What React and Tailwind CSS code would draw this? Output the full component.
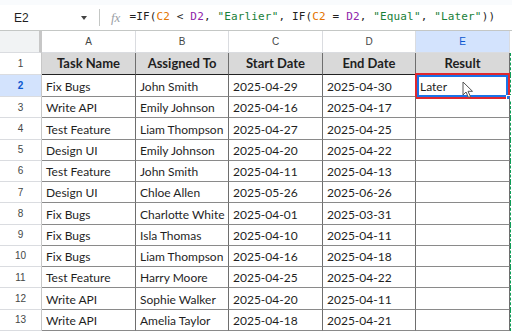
import React from "react";

const rows = [
  ["Fix Bugs", "John Smith", "2025-04-29", "2025-04-30", "Later"],
  ["Write API", "Emily Johnson", "2025-04-16", "2025-04-17", ""],
  ["Test Feature", "Liam Thompson", "2025-04-27", "2025-04-25", ""],
  ["Design UI", "Emily Johnson", "2025-04-20", "2025-04-22", ""],
  ["Test Feature", "John Smith", "2025-04-11", "2025-04-13", ""],
  ["Design UI", "Chloe Allen", "2025-05-26", "2025-06-26", ""],
  ["Fix Bugs", "Charlotte White", "2025-04-01", "2025-03-31", ""],
  ["Fix Bugs", "Isla Thomas", "2025-04-10", "2025-04-11", ""],
  ["Fix Bugs", "Liam Thompson", "2025-04-16", "2025-04-18", ""],
  ["Test Feature", "Harry Moore", "2025-04-25", "2025-04-22", ""],
  ["Write API", "Sophie Walker", "2025-04-20", "2025-04-11", ""],
  ["Write API", "Amelia Taylor", "2025-04-18", "2025-04-21", ""],
];

const headers = ["Task Name", "Assigned To", "Start Date", "End Date", "Result"];
const widths = ["w-[94px]", "w-[93px]", "w-[94px]", "w-[93px]", "w-[94px]"];
const letters = ["A", "B", "C", "D", "E"];

function Cursor() {
  return (
    <svg width="12" height="18" viewBox="0 0 12 18" className="absolute left-[45px] top-[6px]">
      <path d="M1 1 L1 14 L4 11 L6.5 16.5 L8.5 15.6 L6 10.3 L10.5 10.3 Z" fill="#fff" stroke="#555" strokeWidth="1" strokeLinejoin="round" />
    </svg>
  );
}

export default function App() {
  return (
    <div className="w-[512px] h-[331px] overflow-hidden bg-white" style={{ fontFamily: "Lato, 'Liberation Sans', sans-serif" }}>
      {/* formula bar */}
      <div className="h-[5px] bg-[#f9fbfd]" />
      <div className="h-[26px] flex items-center border-b border-[#c4c7c5] bg-white">
        <div className="w-[99px] flex items-center pl-[14px] pr-[12px] justify-between">
          <span className="text-[12px] text-[#1f1f1f]" style={{ fontFamily: "'Liberation Sans', sans-serif" }}>E2</span>
          <span className="w-0 h-0 border-l-[3.5px] border-r-[3.5px] border-t-[4px] border-l-transparent border-r-transparent border-t-[#444]" />
        </div>
        <div className="w-px h-[17px] bg-[#c4c7c5]" />
        <span className="ml-[11px] text-[13px] italic text-[#9aa0a6]" style={{ fontFamily: "'Liberation Serif', serif" }}>fx</span>
        <div className="ml-[9px] text-[11px] text-[#1f1f1f] whitespace-pre tracking-[0.15px]" style={{ fontFamily: "'DejaVu Sans Mono', monospace" }}>
          =IF(<span className="text-[#e37400]">C2</span> &lt; <span className="text-[#8e24aa]">D2</span>, <span className="text-[#188038]">"Earlier"</span>, IF(<span className="text-[#e37400]">C2</span> = <span className="text-[#8e24aa]">D2</span>, <span className="text-[#188038]">"Equal"</span>, <span className="text-[#188038]">"Later"</span>))
        </div>
      </div>

      {/* column letters */}
      <div className="flex h-[22px]">
        <div className="w-[42px] shrink-0 bg-[#f1f3f4] border-r-[3px] border-r-[#c7c7c7] border-b border-b-[#dadce0]" />
        {letters.map((l, i) => (
          <div
            key={l}
            className={`${widths[i]} shrink-0 flex items-center justify-center text-[10px] border-r border-b border-[#dadce0] ${i === 4 ? "bg-[#d3e3fd] text-[#0b57d0]" : "bg-white text-[#444746]"}`}
            style={{ fontFamily: "'Liberation Sans', sans-serif" }}
          >
            {l}
          </div>
        ))}
        <div className="flex-1" />
      </div>

      {/* header row 1 */}
      <div className="flex h-[22px]">
        <div className="w-[42px] shrink-0 flex items-center justify-center text-[10px] text-[#444746] border-r border-r-[#c7c7c7] border-b border-b-[#dadce0]" style={{ fontFamily: "'Liberation Sans', sans-serif" }}>1</div>
        {headers.map((h, i) => (
          <div key={h} className={`${widths[i]} shrink-0 flex items-end justify-center pb-[1px] bg-[#d9d9d9] text-[13px] font-bold text-[#1f1f1f] border-r border-r-[#6e6e6e] border-b border-b-[#222]`}>
            {h}
          </div>
        ))}
        <div className="flex-1 border-l border-dashed border-[#0f9d58]" />
      </div>

      {rows.map((r, ri) => {
        const num = ri + 2;
        const sel = num === 2;
        return (
          <div key={ri} className={`flex ${sel ? "h-[22px]" : "h-[21.25px]"}`}>
            <div
              className={`w-[42px] shrink-0 flex items-center justify-center text-[10px] border-r border-r-[#c7c7c7] border-b border-b-[#dadce0] ${sel ? "bg-[#d3e3fd] font-bold text-[#0b57d0]" : "text-[#444746]"}`}
              style={{ fontFamily: "'Liberation Sans', sans-serif" }}
            >
              {num}
            </div>
            {r.map((c, ci) => (
              <div key={ci} className={`${widths[ci]} shrink-0 relative flex items-end pl-[4px] text-[12px] leading-[18px] text-[#1f1f1f] whitespace-nowrap border-r border-r-[#6e6e6e] border-b border-b-[#8a8a8a]`}>
                {c}
                {sel && ci === 4 && (
                  <div className="absolute -left-px -top-[2px] w-[95px] h-[26px] border-2 border-[#e0282e]">
                    <div className="absolute inset-0 border-2 border-[#1a73e8]" />
                    <div className="absolute -right-[3px] -bottom-[3px] w-[5px] h-[5px] bg-[#1a73e8] border border-white" />
                    <Cursor />
                  </div>
                )}
              </div>
            ))}
            <div className="flex-1 border-l border-dashed border-[#0f9d58]" />
          </div>
        );
      })}
    </div>
  );
}
